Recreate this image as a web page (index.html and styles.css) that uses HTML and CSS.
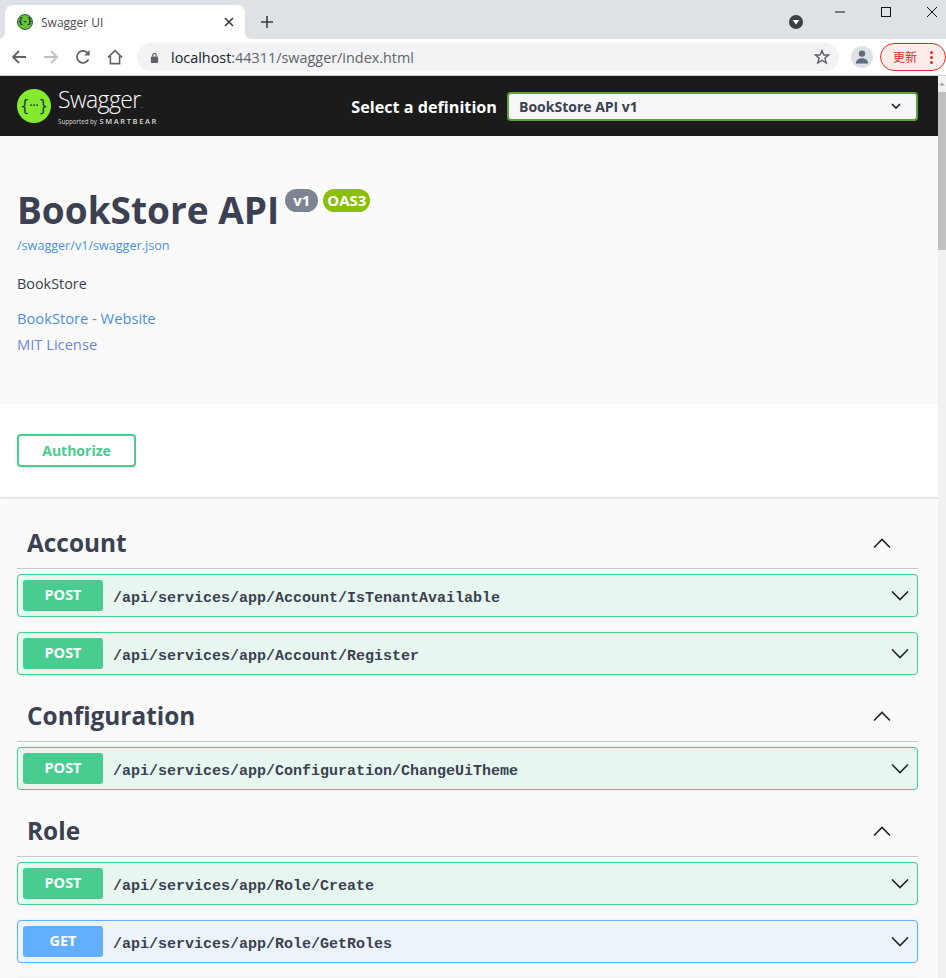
FILE: index.html
```html
<!DOCTYPE html>
<html lang="en">
<head>
<meta charset="utf-8">
<title>Swagger UI</title>
<link rel="stylesheet" href="styles.css">
</head>
<body>
<div class="browser">
  <div class="tabstrip">
    <div class="tab">
      <span class="favicon"><span>{-}</span></span>
      <span class="tab-title">Swagger UI</span>
      <svg class="tab-close" viewBox="0 0 10 10" width="10" height="10"><path d="M1 1L9 9M9 1L1 9" stroke="#3c4043" stroke-width="1.7" fill="none"/></svg>
    </div>
    <svg class="new-tab" viewBox="0 0 12 12" width="12" height="12"><path d="M6 0V12M0 6H12" stroke="#3c4043" stroke-width="1.6" fill="none"/></svg>
    <div class="strip-right">
      <svg class="tab-search" viewBox="0 0 16 16" width="16" height="16"><circle cx="8" cy="8" r="7" fill="#3c4043"/><path d="M4.6 6H11.4L8 10.4Z" fill="#fff"/></svg>
      <div class="winctl">
        <svg viewBox="0 0 10 10" width="10" height="10"><path d="M0 5H10" stroke="#111" stroke-width="1" fill="none"/></svg>
        <svg viewBox="0 0 10 10" width="10" height="10"><rect x=".5" y=".5" width="9" height="9" stroke="#111" stroke-width="1" fill="none"/></svg>
        <svg viewBox="0 0 10 10" width="10" height="10"><path d="M0 0L10 10M10 0L0 10" stroke="#111" stroke-width="1" fill="none"/></svg>
      </div>
    </div>
  </div>
  <div class="toolbar">
    <svg class="tool" viewBox="0 0 16 16" width="16" height="16"><path d="M15 8H2M8 2L2 8L8 14" stroke="#5f6368" stroke-width="1.8" fill="none"/></svg>
    <svg class="tool" viewBox="0 0 16 16" width="16" height="16"><path d="M1 8H14M8 2L14 8L8 14" stroke="#bdc1c6" stroke-width="1.8" fill="none"/></svg>
    <svg class="tool" viewBox="0 0 16 16" width="16" height="16"><path d="M13.4 10.5A6 6 0 1 1 13 4.6" stroke="#5f6368" stroke-width="1.8" fill="none"/><path d="M14.6 1V6.4H9.2Z" fill="#5f6368"/></svg>
    <svg class="tool" viewBox="0 0 16 16" width="16" height="16"><path d="M1 8.4L8 1.6L15 8.4M3.4 7V14.6H12.6V7" stroke="#5f6368" stroke-width="1.6" fill="none"/></svg>
    <div class="omnibox">
      <svg viewBox="0 0 10 12" width="9" height="11"><rect x="1" y="5" width="8" height="7" rx="1" fill="#5f6368"/><path d="M3 5V3.4a2 2 0 0 1 4 0V5" stroke="#5f6368" stroke-width="1.3" fill="none"/></svg>
      <span class="url"><span class="host">localhost</span>:44311/swagger/index.html</span>
      <svg class="star" viewBox="0 0 16 16" width="16" height="16"><path d="M8 1.6L9.9 6H14.7L10.9 9.1L12.3 14L8 11.3L3.7 14L5.1 9.1L1.3 6H6.1Z" stroke="#5f6368" stroke-width="1.4" fill="none"/></svg>
    </div>
    <span class="avatar"><svg viewBox="0 0 14 14" width="14" height="14"><circle cx="7" cy="3.6" r="3.2" fill="#5f6b7f"/><path d="M0.8 13.4C1 9.8 4 8.2 7 8.2S13 9.8 13.2 13.4Z" fill="#5f6b7f"/></svg></span>
    <span class="update"><span>更新</span><span class="dots"><i></i><i></i><i></i></span></span>
  </div>
</div>
<div class="viewport">
  <main class="page">
    <header class="topbar">
      <div class="logo">
        <span class="logo-mark">{<b>···</b>}</span>
        <div class="logo-text">
          <span class="logo-name">Swagger<small>.</small></span>
          <span class="logo-sub">Supported by <b>SMARTBEAR</b></span>
        </div>
      </div>
      <div class="definition">
        <span class="definition-label">Select a definition</span>
        <div class="select">
          <span>BookStore API v1</span>
          <svg viewBox="0 0 10 6" width="10" height="6"><path d="M1 1L5 5L9 1" stroke="#222" stroke-width="1.7" fill="none"/></svg>
        </div>
      </div>
    </header>
    <section class="info">
      <div class="title-row">
        <h1>BookStore API</h1>
        <span class="badge badge-version">v1</span>
        <span class="badge badge-oas">OAS3</span>
      </div>
      <a class="spec-link">/swagger/v1/swagger.json</a>
      <p class="description">BookStore</p>
      <a class="info-link">BookStore - Website</a>
      <a class="info-link">MIT License</a>
    </section>
    <section class="scheme">
      <button class="authorize">Authorize</button>
    </section>
    <section class="tags">
      <div class="tag">
        <div class="tag-head"><h2>Account</h2><svg viewBox="0 0 20 12" width="20" height="12"><path d="M2 10.5L10 2.5L18 10.5" stroke="#222" stroke-width="1.6" fill="none"/></svg></div>
        <div class="op op-post"><span class="method">POST</span><span class="path">/api/services/app/Account/IsTenantAvailable</span><svg viewBox="0 0 20 12" width="20" height="12"><path d="M2 1.5L10 9.5L18 1.5" stroke="#222" stroke-width="1.6" fill="none"/></svg></div>
        <div class="op op-post"><span class="method">POST</span><span class="path">/api/services/app/Account/Register</span><svg viewBox="0 0 20 12" width="20" height="12"><path d="M2 1.5L10 9.5L18 1.5" stroke="#222" stroke-width="1.6" fill="none"/></svg></div>
      </div>
      <div class="tag">
        <div class="tag-head"><h2>Configuration</h2><svg viewBox="0 0 20 12" width="20" height="12"><path d="M2 10.5L10 2.5L18 10.5" stroke="#222" stroke-width="1.6" fill="none"/></svg></div>
        <div class="op op-post"><span class="method">POST</span><span class="path">/api/services/app/Configuration/ChangeUiTheme</span><svg viewBox="0 0 20 12" width="20" height="12"><path d="M2 1.5L10 9.5L18 1.5" stroke="#222" stroke-width="1.6" fill="none"/></svg></div>
      </div>
      <div class="tag">
        <div class="tag-head"><h2>Role</h2><svg viewBox="0 0 20 12" width="20" height="12"><path d="M2 10.5L10 2.5L18 10.5" stroke="#222" stroke-width="1.6" fill="none"/></svg></div>
        <div class="op op-post"><span class="method">POST</span><span class="path">/api/services/app/Role/Create</span><svg viewBox="0 0 20 12" width="20" height="12"><path d="M2 1.5L10 9.5L18 1.5" stroke="#222" stroke-width="1.6" fill="none"/></svg></div>
        <div class="op op-get"><span class="method">GET</span><span class="path">/api/services/app/Role/GetRoles</span><svg viewBox="0 0 20 12" width="20" height="12"><path d="M2 1.5L10 9.5L18 1.5" stroke="#222" stroke-width="1.6" fill="none"/></svg></div>
        <div class="op op-get"></div>
      </div>
    </section>
  </main>
  <div class="scrollbar">
    <svg viewBox="0 0 8 6" width="8" height="6"><path d="M4 1.5L7 4.5H1Z" fill="#a3a3a3"/></svg>
    <div class="thumb"></div>
  </div>
</div>
</body>
</html>
```

FILE: styles.css
```css
* { box-sizing: border-box; }
html, body { margin: 0; height: 978px; overflow: hidden; background: #fafafa; }
body { display: flex; flex-direction: column; font-family: "Open Sans", "Noto Sans", sans-serif; color: #3b4151; }

.browser { flex: none; height: 76px; background: #fff; border-bottom: 1px solid #d0d2d6; }
.tabstrip { height: 39px; background: #dee1e6; display: flex; padding: 5px 0 0 5px; position: relative; }
.tab { width: 240px; height: 34px; background: #fff; border-radius: 8px 8px 0 0; display: flex; align-items: center; padding: 0 10px 0 12px; position: relative; }
.tab::before, .tab::after { content: ""; position: absolute; bottom: 0; width: 6px; height: 6px; }
.tab::before { left: -6px; background: radial-gradient(circle at 0 0, transparent 5.5px, #fff 6px); }
.tab::after { right: -6px; background: radial-gradient(circle at 100% 0, transparent 5.5px, #fff 6px); }
.favicon { width: 16px; height: 16px; border-radius: 50%; background: #6ac22f; border: 1px solid #2f5d35; display: flex; align-items: center; justify-content: center; font: 700 8px/1 "DejaVu Sans", sans-serif; color: #173647; flex: none; }
.tab-title { margin-left: 8px; font-size: 12px; color: #4a4d52; flex: 1; }
.tab-close { flex: none; margin-right: 1px; margin-bottom: 1px; }
.new-tab { margin: 11px 0 0 16px; }
.strip-right { margin-left: auto; display: flex; }
.tab-search { margin: 9px 31px 0 0; }
.winctl { display: flex; gap: 36px; padding: 1px 9px 0 0; margin-top: 1px; }
.toolbar { height: 36px; display: flex; align-items: center; padding: 0 0 0 11px; }
.tool { margin-right: 16px; flex: none; }
.omnibox { width: 703px; height: 28px; margin-left: -2px; background: #f1f3f4; border-radius: 14px; display: flex; align-items: center; padding: 0 9px 0 13px; }
.url { margin-left: 12px; font-size: 14.4px; color: #5f6368; flex: 1; }
.host { color: #202124; }
.star { flex: none; }
.avatar { width: 22px; height: 22px; border-radius: 50%; background: #dee1e6; margin-left: 12px; display: flex; align-items: center; justify-content: center; flex: none; }
.update { width: 66px; height: 28px; margin-left: 7px; border: 1px solid #d93025; background: #fdecea; border-radius: 14px; display: flex; align-items: center; padding-left: 12px; color: #d93025; font: 12px/1 "Noto Sans CJK SC", sans-serif; flex: none; }
.dots { display: flex; flex-direction: column; gap: 2px; margin-left: 13px; }
.dots i { width: 3px; height: 3px; border-radius: 50%; background: #d93025; display: block; }

.viewport { flex: 1; display: flex; min-height: 0; }
.page { flex: 1; min-width: 0; overflow: hidden; }
.scrollbar { width: 8px; flex: none; background: #f1f1f1; display: flex; flex-direction: column; padding-top: 5px; }
.thumb { height: 158px; margin-top: 5px; background: #c1c1c1; }

.topbar { height: 60px; background: #1b1b1b; display: flex; align-items: center; padding: 0 20px 0 17px; justify-content: space-between; }
.logo { display: flex; align-items: center; gap: 7px; }
.logo-mark { width: 34px; height: 34px; border-radius: 50%; background: #85ea2d; color: #173647; display: flex; align-items: center; justify-content: center; font: 400 15px/1 "DejaVu Sans", sans-serif; }
.logo-mark b { font-size: 8px; }
.logo-text { display: flex; flex-direction: column; color: #fff; }
.logo-name { font-size: 23px; font-weight: 300; line-height: 27px; letter-spacing: -.6px; }
.logo-name small { font-size: 8px; }
.logo-sub { font-size: 6.2px; line-height: 9px; color: #ddd; margin-top: -1px; }
.logo-sub b { font-size: 7.5px; letter-spacing: 1.6px; font-weight: 600; margin-left: 1px; }
.definition { display: flex; align-items: center; gap: 10px; }
.definition-label { color: #fff; font-size: 16.2px; font-weight: 700; padding-top: 1px; }
.select { width: 411px; height: 29px; background: #f7f7f7; border: 2px solid #62a03f; border-radius: 4px; display: flex; align-items: center; justify-content: space-between; padding: 0 15px 0 10px; font-size: 14px; font-weight: 700; color: #3b4151; }

.info { height: 268px; padding: 50px 17px 0; background: #fafafa; display: flex; flex-direction: column; align-items: flex-start; }
.title-row { display: flex; align-items: flex-start; }
h1 { margin: 0; font-size: 37px; line-height: 48px; height: 50px; font-weight: 700; color: #3b4151; }
.badge { color: #fff; font-size: 15px; font-weight: 700; height: 23px; line-height: 23px; border-radius: 12px; margin-top: 3px; text-align: center; }
.badge-version { background: #7d8492; width: 33px; margin-left: 6px; }
.badge-oas { background: #89bf04; width: 47px; margin-left: 5px; }
.spec-link { font-size: 12.6px; line-height: 18px; color: #4990e2; margin-top: 1px; }
.description { margin: 19px 0 0; font-size: 14.4px; line-height: 20px; color: #3b4151; }
.info-link { font-size: 14.7px; line-height: 26px; color: #4990e2; }
.description + .info-link { margin-top: 11px; }
.info-link + .info-link { color: #6f85dd; }

.scheme { height: 93px; background: #fff; padding: 30px 17px 0; box-shadow: 0 1px 2px rgba(0,0,0,.15); position: relative; }
.authorize { width: 119px; height: 33px; background: #fff; border: 2px solid #49cc90; border-radius: 4px; color: #49cc90; font: 700 14px "Open Sans", sans-serif; padding: 0; box-shadow: 0 1px 2px rgba(0,0,0,.1); }

.tags { padding: 21px 20px 0 17px; }
.tag-head { height: 51px; display: flex; align-items: center; justify-content: space-between; border-bottom: 1px solid #c6c8cc; padding: 0 26px 1px 10px; }
h2 { margin: 0; font-size: 24.4px; line-height: 32px; font-weight: 700; color: #3b4151; }
.tag-head svg { flex: none; }
.tag + .tag { margin-top: 16px; }
.op { height: 43px; margin-top: 5px; border: 1px solid; border-radius: 4px; display: flex; align-items: center; padding: 0 7px 0 5px; box-shadow: 0 0 2px rgba(0,0,0,.12); }
.op + .op { margin-top: 15px; }
.op-post { background: #e8f6f0; border-color: #49cc90; }
.op-get { background: #ebf3fb; border-color: #61affe; }
.method { width: 80px; height: 31px; border-radius: 3px; color: #fff; font-size: 14.5px; font-weight: 700; line-height: 30px; text-align: center; flex: none; }
.op-post .method { background: #49cc90; }
.op-get .method { background: #61affe; }
.path { margin-left: 10px; padding-top: 5px; font: 700 15px "Liberation Mono", monospace; color: #3b4151; flex: 1; }
.op svg { flex: none; }
```
